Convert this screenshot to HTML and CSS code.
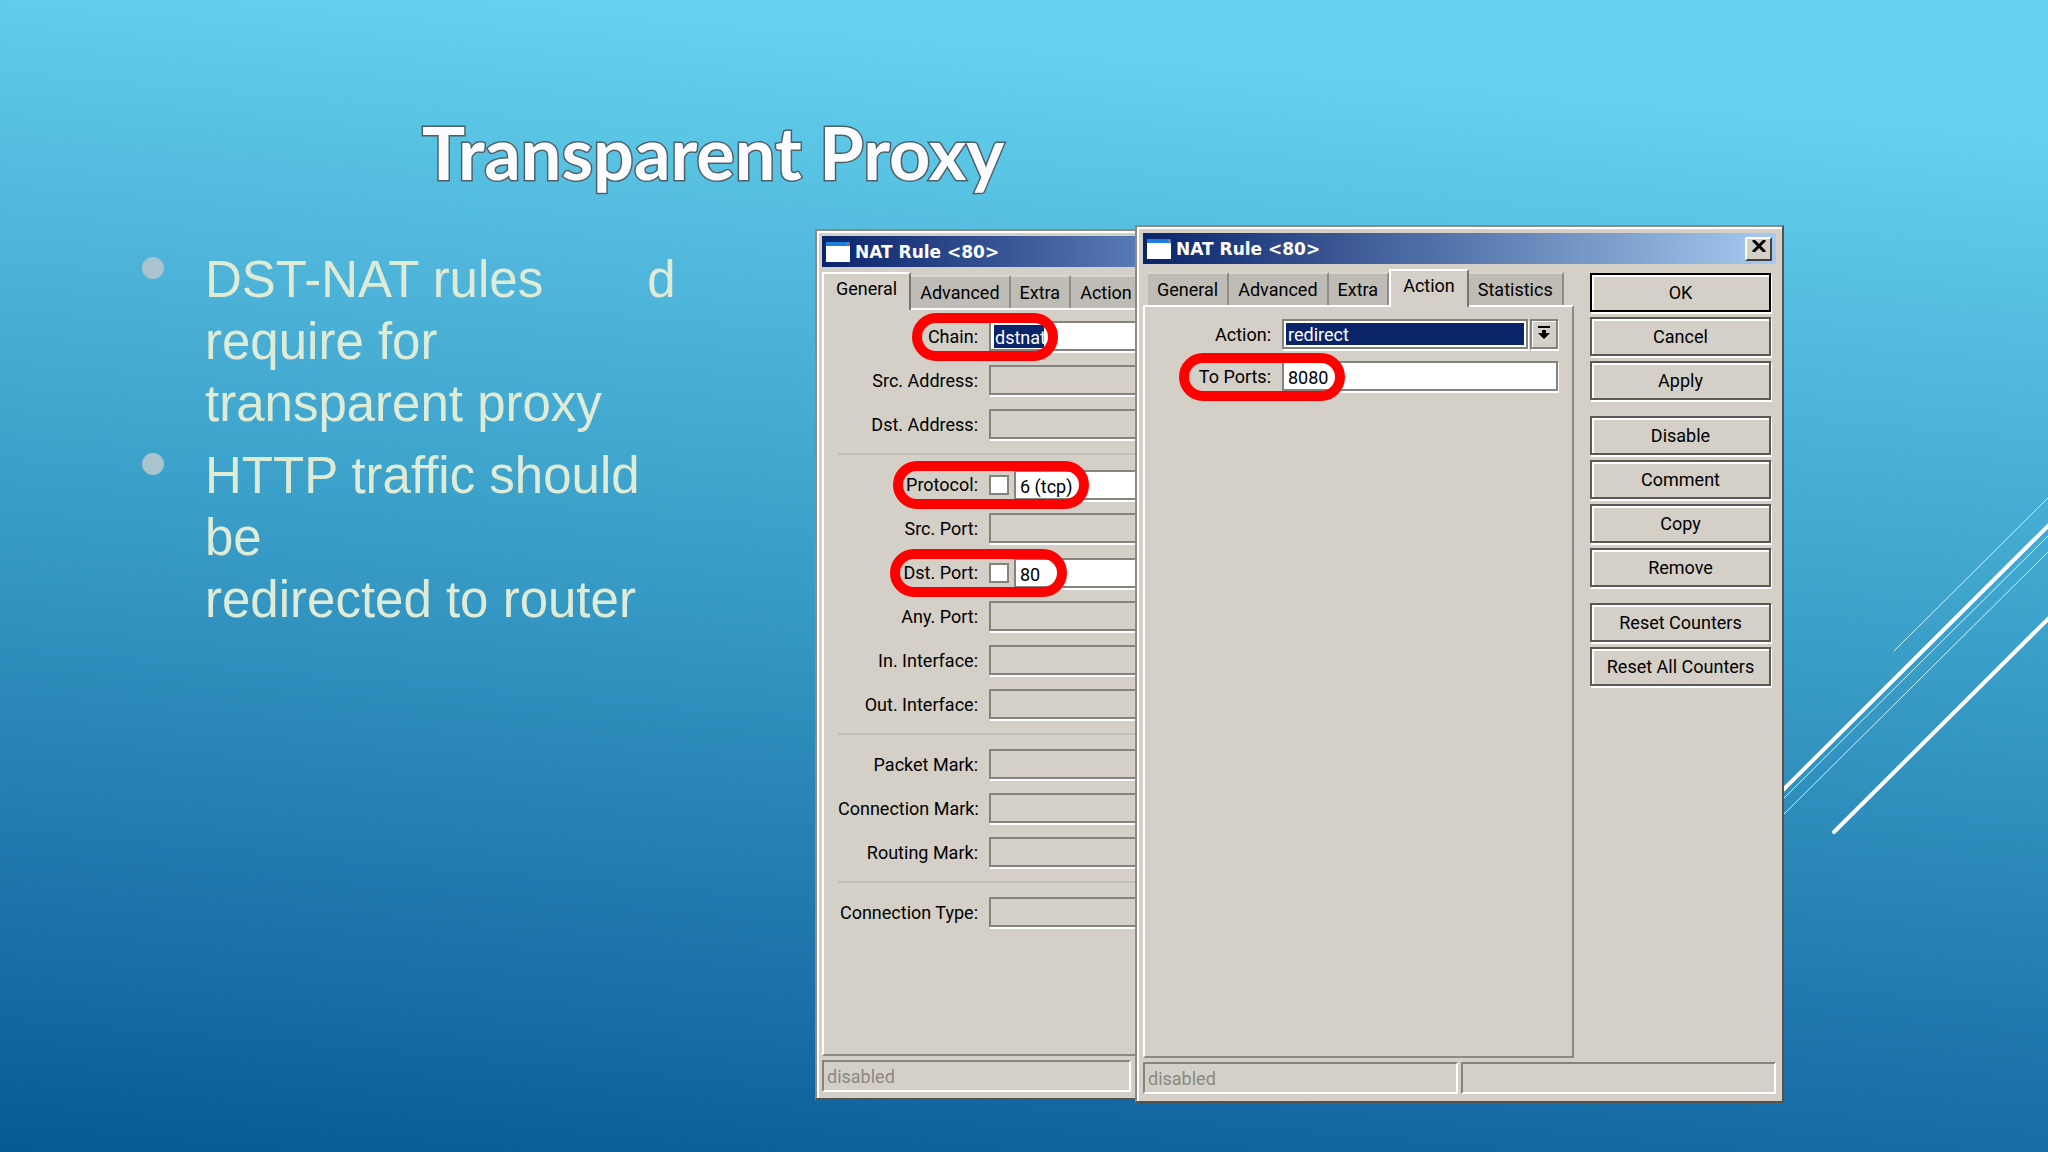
FILE: index.html
```
<!DOCTYPE html>
<html lang="en">
<head>
    <meta charset="UTF-8">
    <meta name="viewport" content="width=device-width, initial-scale=1.0">
    <title>Transparent Proxy</title>
    <link rel="stylesheet" href="styles.css">
</head>
<body>
    <h1>Transparent Proxy</h1>

    <main class="slide">
        <ul class="points">
            <li>DST-NAT rules<span class="tab"></span>d<br>require for<br>transparent proxy</li>
            <li>HTTP traffic should<br>be<br>redirected to router</li>
        </ul>

        <div class="windows">
            <section class="window back">
                <header class="titlebar">
                    <svg class="app-icon" viewBox="0 0 24 20"><path fill="#fff" d="M0 0h24v20H0z"/><path fill="#1c7fe0" d="M0 0h24v4H0z"/><path fill="#e06040" d="M21 1h2v2h-2z"/></svg>
                    <h2>NAT Rule &lt;80&gt;</h2>
                </header>
                <div class="content">
                    <div class="pane">
                        <nav class="tabs">
                            <button class="active">General</button>
                            <button>Advanced</button>
                            <button>Extra</button>
                            <button>Action</button>
                        </nav>
                        <form class="panel">
                            <div class="row">
                                <label for="chain">Chain:</label>
                                <input id="chain" class="field filled selected" type="text" value="dstnat">
                                <span class="ring ring-chain"></span>
                            </div>
                            <div class="row">
                                <label for="src-address">Src. Address:</label>
                                <input id="src-address" class="field" type="text">
                            </div>
                            <div class="row">
                                <label for="dst-address">Dst. Address:</label>
                                <input id="dst-address" class="field" type="text">
                            </div>
                            <hr>
                            <div class="row">
                                <label for="protocol">Protocol:</label>
                                <div class="negatable">
                                    <input type="checkbox" aria-label="Not protocol">
                                    <input id="protocol" class="field filled" type="text" value="6 (tcp)">
                                </div>
                                <span class="ring ring-protocol"></span>
                            </div>
                            <div class="row">
                                <label for="src-port">Src. Port:</label>
                                <input id="src-port" class="field" type="text">
                            </div>
                            <div class="row">
                                <label for="dst-port">Dst. Port:</label>
                                <div class="negatable">
                                    <input type="checkbox" aria-label="Not dst. port">
                                    <input id="dst-port" class="field filled" type="text" value="80">
                                </div>
                                <span class="ring ring-dst-port"></span>
                            </div>
                            <div class="row">
                                <label for="any-port">Any. Port:</label>
                                <input id="any-port" class="field" type="text">
                            </div>
                            <div class="row">
                                <label for="in-interface">In. Interface:</label>
                                <input id="in-interface" class="field" type="text">
                            </div>
                            <div class="row">
                                <label for="out-interface">Out. Interface:</label>
                                <input id="out-interface" class="field" type="text">
                            </div>
                            <hr>
                            <div class="row">
                                <label for="packet-mark">Packet Mark:</label>
                                <input id="packet-mark" class="field" type="text">
                            </div>
                            <div class="row">
                                <label for="connection-mark">Connection Mark:</label>
                                <input id="connection-mark" class="field" type="text">
                            </div>
                            <div class="row">
                                <label for="routing-mark">Routing Mark:</label>
                                <input id="routing-mark" class="field" type="text">
                            </div>
                            <hr>
                            <div class="row">
                                <label for="connection-type">Connection Type:</label>
                                <input id="connection-type" class="field" type="text">
                            </div>
                        </form>
                    </div>
                </div>
                <footer class="status">
                    <span>disabled</span>
                </footer>
            </section>

            <section class="window front">
                <header class="titlebar">
                    <svg class="app-icon" viewBox="0 0 24 20"><path fill="#fff" d="M0 0h24v20H0z"/><path fill="#1c7fe0" d="M0 0h24v4H0z"/><path fill="#e06040" d="M21 1h2v2h-2z"/></svg>
                    <h2>NAT Rule &lt;80&gt;</h2>
                    <button class="close" aria-label="Close">
                        <svg viewBox="0 0 14 12"><path d="M1 0l12 12M13 0L1 12" stroke="#000" stroke-width="3"/></svg>
                    </button>
                </header>
                <div class="content">
                    <div class="pane">
                        <nav class="tabs">
                            <button>General</button>
                            <button>Advanced</button>
                            <button>Extra</button>
                            <button class="active">Action</button>
                            <button>Statistics</button>
                        </nav>
                        <form class="panel">
                            <div class="row">
                                <label for="action">Action:</label>
                                <div class="dropdown">
                                    <select id="action">
                                        <option>redirect</option>
                                    </select>
                                    <button type="button" aria-label="Show actions">
                                        <svg viewBox="0 0 12 14"><path d="M0 0h12v2H0zM4 4h4v3h4l-6 6-6-6h4z"/></svg>
                                    </button>
                                </div>
                            </div>
                            <div class="row">
                                <label for="to-ports">To Ports:</label>
                                <input id="to-ports" class="field filled" type="text" value="8080">
                                <span class="ring ring-to-ports"></span>
                            </div>
                        </form>
                    </div>
                    <div class="actions">
                        <button class="default">OK</button>
                        <button>Cancel</button>
                        <button>Apply</button>
                        <button class="group">Disable</button>
                        <button>Comment</button>
                        <button>Copy</button>
                        <button>Remove</button>
                        <button class="group">Reset Counters</button>
                        <button>Reset All Counters</button>
                    </div>
                </div>
                <footer class="status">
                    <span>disabled</span>
                    <span></span>
                </footer>
            </section>
        </div>

        <svg class="streaks" viewBox="0 0 264 340" stroke="#fff" stroke-linecap="round">
            <path d="M110 156L268 -1" stroke="#c8f4ff"/>
            <path d="M-4 298L268 27" stroke-width="4"/>
            <path d="M-4 307L268 37" stroke="#c8f4ff"/>
            <path d="M-4 323L268 53" stroke="#c8f4ff"/>
            <path d="M50 337L268 120" stroke-width="4"/>
        </svg>
    </main>
</body>
</html>
```
FILE: styles.css
```
* {
    box-sizing: border-box;
}
body {
    margin: 0;
    min-height: 100vh;
    display: flex;
    flex-direction: column;
    background: linear-gradient(185deg, #66d4f0 0%, #65d3ef 10%, #5ecbe8 15%, #50b6db 30%, #3a9fc8 50%, #2985b6 68%, #156aa3 88%, #065a94 100%);
    font-family: "Liberation Sans", Arial, sans-serif;
}
h1 {
    margin: 0;
    padding: 110px 0 31px 422px;
    font-family: Lato, sans-serif;
    font-size: 72px;
    line-height: 84px;
    font-weight: bold;
    color: #fafcff;
    -webkit-text-stroke: 3px #4f5f68;
    paint-order: stroke fill;
}
.slide {
    flex: 1;
    display: grid;
    grid-template-columns: 815fr 969fr 264fr;
    padding-bottom: 49px;
}

/* bullet list */
.points {
    list-style: none;
    margin: 0;
    padding: 24px 0 0 205px;
    font-size: 51px;
    line-height: 62px;
    color: #deebd6;
}
.points li {
    position: relative;
    margin-bottom: 10px;
    white-space: nowrap;
}
.points li::before {
    content: "";
    position: absolute;
    left: -63px;
    top: 8px;
    width: 22px;
    height: 22px;
    border-radius: 50%;
    background: #a9c3cf;
}
.tab {
    display: inline-block;
    width: 104px;
}

/* windows */
.windows {
    display: grid;
    grid-template-columns: 320fr 649fr;
    font-family: Roboto, "Liberation Sans", sans-serif;
    font-size: 18px;
    line-height: 24px;
    color: #000;
}
.window {
    display: flex;
    flex-direction: column;
    min-width: 0;
    padding: 5px;
    background: #d4d0c8;
    border: 2px solid #55524e;
    border-top-color: #8c8a84;
    border-left-color: #8c8a84;
    box-shadow: inset 2px 2px #fff;
}
.back {
    margin: 4px 0 3px;
    padding: 4px 0 4px 4px;
    border-right: none;
    overflow: hidden;
}
.titlebar {
    display: flex;
    align-items: center;
    gap: 5px;
    height: 31px;
    margin: 1px 1px 0;
    padding: 0 4px;
    background: linear-gradient(90deg, #0a246a, #a6caf0);
}
.back .titlebar {
    margin-right: 0;
    background: linear-gradient(90deg, #0a246a, #587ab4);
}
.titlebar h2 {
    flex: 1;
    margin: 0;
    font-family: "DejaVu Sans", sans-serif;
    font-size: 17px;
    font-weight: bold;
    color: #fff;
}
.app-icon {
    width: 24px;
    height: 20px;
}
.close {
    width: 27px;
    height: 24px;
    padding: 0 0 2px;
    background: #d4d0c8;
    border: 2px solid #404040;
    border-top-color: #fff;
    border-left-color: #fff;
}
.close svg {
    width: 14px;
    height: 12px;
}
.content {
    flex: 1;
    display: flex;
    gap: 16px;
    margin-top: 3px;
}
.pane {
    flex: 1;
    min-width: 0;
    display: flex;
    flex-direction: column;
}
.tabs {
    display: flex;
    align-items: flex-end;
    height: 38px;
    padding-left: 6px;
}
.back .tabs {
    padding-left: 1px;
}
.tabs button {
    height: 33px;
    padding: 0 9px;
    font: inherit;
    color: #000;
    background: #bfbbb5;
    border: solid #d9d6d0;
    border-width: 2px 2px 0 0;
    border-right-color: #8f8d88;
    white-space: nowrap;
}
.tabs button.active {
    position: relative;
    height: 38px;
    margin-bottom: -2px;
    padding: 0 12px 6px;
    background: #d4d0c8;
    border: solid #fff;
    border-width: 2px 2px 0;
    border-right-color: #77756f;
}
.panel {
    flex: 1;
    display: flex;
    flex-direction: column;
    gap: 14px;
    margin-left: 1px;
    padding: 12px 14px;
    border: 2px solid #fff;
    border-right-color: #8c8a84;
    border-bottom-color: #8c8a84;
}
.back .panel {
    padding-top: 11px;
    padding-right: 0;
    border-right: none;
}
.front .panel {
    gap: 12px;
}
.row {
    position: relative;
    display: grid;
    grid-template-columns: 140px 1fr;
    gap: 11px;
    height: 30px;
}
.front .row {
    grid-template-columns: 112px 1fr;
}
.row label {
    line-height: 32px;
    text-align: right;
    white-space: nowrap;
}
.field {
    width: 100%;
    min-width: 0;
    height: 30px;
    padding: 2px 4px 0;
    font: inherit;
    background: #d4d0c8;
    border: 2px solid #85837d;
    border-radius: 0;
    box-shadow: 1px 2px #fff;
}
.back .field {
    border-right: none;
}
.filled {
    background: #fff;
}
.selected {
    color: #fff;
    background: linear-gradient(#0a246a, #0a246a) 3px 2px / 50px 23px no-repeat #fff;
}
hr {
    width: 100%;
    height: 2px;
    margin: 0;
    border: none;
    background: #c2beb8;
}
.negatable {
    display: flex;
    align-items: center;
    gap: 5px;
}
.negatable input[type="checkbox"] {
    appearance: none;
    flex: none;
    width: 20px;
    height: 20px;
    margin: 0;
    background: #fff;
    border: 2px solid #85837d;
}
.dropdown {
    display: flex;
    gap: 2px;
}
.dropdown select {
    appearance: none;
    flex: 1;
    min-width: 0;
    height: 30px;
    padding: 2px 4px 0;
    font: inherit;
    color: #fff;
    background: #0a246a;
    border: 2px solid #85837d;
    border-radius: 0;
    box-shadow: inset 0 0 0 2px #fff, 1px 2px #fff;
}
.dropdown button {
    width: 28px;
    height: 30px;
    padding: 0;
    background: #d4d0c8;
    border: 2px solid #85837d;
    box-shadow: inset 1px 1px #fff, 1px 2px #fff;
}
.dropdown svg {
    width: 12px;
    height: 14px;
}
.actions {
    display: flex;
    flex-direction: column;
    gap: 5px;
    width: 181px;
    margin: 6px 6px 0 0;
}
.actions button {
    height: 39px;
    padding: 0;
    font: inherit;
    color: #000;
    background: #d4d0c8;
    border: 2px solid #5c5954;
    box-shadow: inset 2px 2px #fff, 1px 2px #fff;
    white-space: nowrap;
}
.actions .default {
    border-color: #000;
}
.actions .group {
    margin-top: 11px;
}
.status {
    display: flex;
    gap: 3px;
    margin: 4px 1px 2px;
}
.status span {
    flex: 1;
    height: 32px;
    padding: 3px;
    color: #8a8882;
    border: 2px solid #fff;
    border-top-color: #85837d;
    border-left-color: #85837d;
}
.back .status {
    margin-right: 4px;
}

/* red marks around the important fields */
.ring {
    position: absolute;
    top: -8px;
    height: 48px;
    border: 10px solid #f00;
    border-radius: 24px;
}
.ring-chain {
    left: 74px;
    width: 146px;
}
.ring-protocol {
    left: 55px;
    width: 196px;
}
.ring-dst-port {
    left: 52px;
    width: 177px;
}
.ring-to-ports {
    left: 20px;
    width: 166px;
}

.streaks {
    width: 100%;
    margin-top: 270px;
    fill: none;
}
```
